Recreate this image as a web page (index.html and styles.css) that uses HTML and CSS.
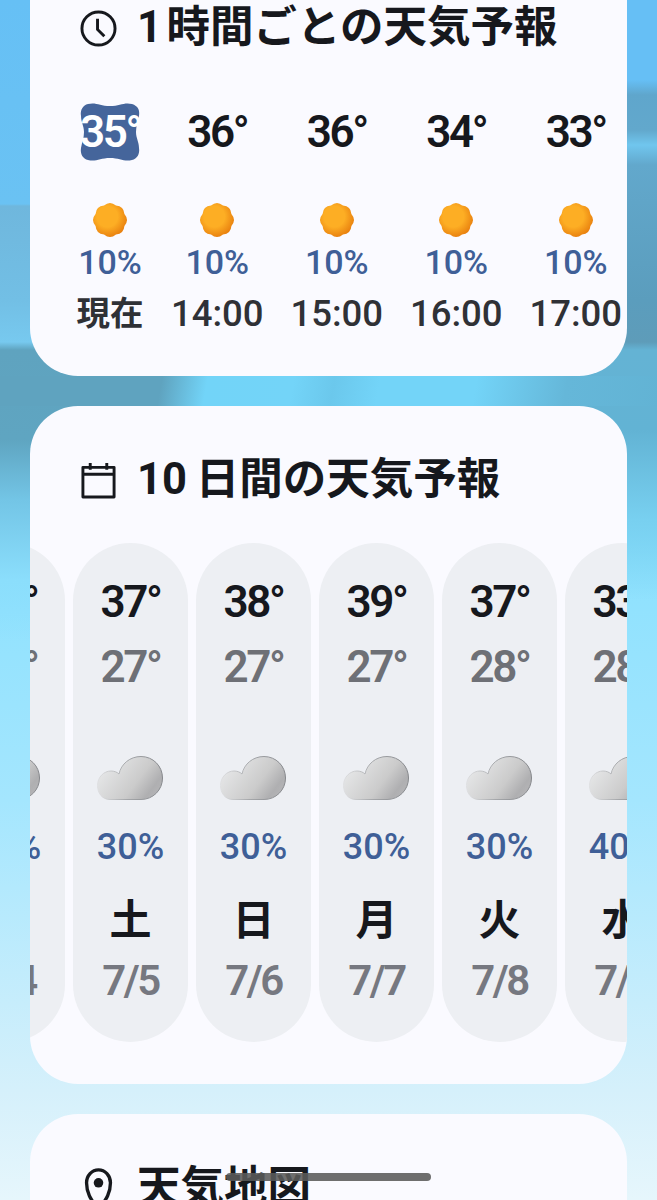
FILE: index.html
```html
<!DOCTYPE html>
<html lang="ja">
<head>
  <meta charset="utf-8">
  <title>天気予報</title>
  <link rel="stylesheet" href="styles.css">
</head>
<body>
  <svg class="defs" width="0" height="0">
    <defs>
      <radialGradient id="sunFill" cx="0.42" cy="0.4" r="0.68">
        <stop offset="0.45" stop-color="#fdae24"/>
        <stop offset="1" stop-color="#e4760a"/>
      </radialGradient>
      <linearGradient id="cloudFill" x1="0" y1="0.3" x2="1" y2="0.8">
        <stop offset="0" stop-color="#e8e9ea"/>
        <stop offset="0.6" stop-color="#cbcbcb"/>
        <stop offset="0.85" stop-color="#afafb1"/>
        <stop offset="1" stop-color="#b5b5b7"/>
      </linearGradient>
      <linearGradient id="cloudLine" x1="0" y1="0" x2="1" y2="0">
        <stop offset="0" stop-color="#dfe0e2"/>
        <stop offset="0.45" stop-color="#a5a7aa"/>
        <stop offset="1" stop-color="#85878b"/>
      </linearGradient>
      <symbol id="sun" viewBox="0 0 36 36">
        <path fill="url(#sunFill)" d="M32.41 23.97Q31.86 31.86 23.97 32.41Q18 37.6 12.03 32.41Q4.14 31.86 3.59 23.97Q-1.6 18 3.59 12.03Q4.14 4.14 12.03 3.59Q18 -1.6 23.97 3.59Q31.86 4.14 32.41 12.03Q37.6 18 32.41 23.97Z"/>
      </symbol>
      <symbol id="cloud" viewBox="0 0 66 44">
        <path fill="url(#cloudFill)" stroke="url(#cloudLine)" stroke-width="1" d="M13 43.500C5 43.500 .5 37 .5 29.500C.5 21 7 15 14 15C17 15 20 16 22 18C24 8 33 .5 44 .5C56 .5 65.500 10 65.500 22C65.500 34 56 43.500 44 43.500Z"/>
      </symbol>
    </defs>
  </svg>

  <div class="page">
    <section class="card hourly">
      <h2 class="card-title">
        <svg class="title-icon" viewBox="0 0 38 38"><circle cx="19" cy="19" r="17" fill="none" stroke="currentColor" stroke-width="3"/><path d="M18 9v11l7 7" fill="none" stroke="currentColor" stroke-width="3"/></svg>
        <span>1&#8202;時間ごとの天気予報</span>
      </h2>
      <div class="hour-row">
        <div class="hour hour-now">
          <div class="temp now-temp">
            <svg class="now-badge" viewBox="0 0 60 60"><path d="M8 2C16 0 20 4 30 4C40 4 44 0 52 2C58 4 60 8 59 14C58 20 56 24 56 30C56 36 59 40 59 46C60 52 57 57 52 58C44 60 40 56 30 56C20 56 16 60 8 58C3 57 0 52 1 46C2 40 4 36 4 30C4 24 1 20 1 14C0 8 3 3 8 2Z"/></svg>
            <span>35°</span>
          </div>
          <svg class="sun"><use href="#sun"/></svg>
          <div class="rain">10%</div>
          <div class="time time-now">現在</div>
        </div>
        <div class="hour">
          <div class="temp">36°</div>
          <svg class="sun"><use href="#sun"/></svg>
          <div class="rain">10%</div>
          <div class="time">14:00</div>
        </div>
        <div class="hour">
          <div class="temp">36°</div>
          <svg class="sun"><use href="#sun"/></svg>
          <div class="rain">10%</div>
          <div class="time">15:00</div>
        </div>
        <div class="hour">
          <div class="temp">34°</div>
          <svg class="sun"><use href="#sun"/></svg>
          <div class="rain">10%</div>
          <div class="time">16:00</div>
        </div>
        <div class="hour">
          <div class="temp">33°</div>
          <svg class="sun"><use href="#sun"/></svg>
          <div class="rain">10%</div>
          <div class="time">17:00</div>
        </div>
      </div>
    </section>

    <section class="card daily">
      <h2 class="card-title">
        <svg class="title-icon" viewBox="0 0 38 38"><path d="M3 5.500h32v30.500H3zM3 12.500h32M10.500 1v7M27.500 1v7" fill="none" stroke="currentColor" stroke-width="3" stroke-linejoin="round"/></svg>
        <span>10 日間の天気予報</span>
      </h2>
      <div class="day-row">
        <div class="day"><div class="temp">37°</div><div class="low">27°</div><svg class="cloud"><use href="#cloud"/></svg><div class="rain">30%</div><div class="weekday">金</div><div class="date">7/4</div></div>
        <div class="day"><div class="temp">37°</div><div class="low">27°</div><svg class="cloud"><use href="#cloud"/></svg><div class="rain">30%</div><div class="weekday">土</div><div class="date">7/5</div></div>
        <div class="day"><div class="temp">38°</div><div class="low">27°</div><svg class="cloud"><use href="#cloud"/></svg><div class="rain">30%</div><div class="weekday">日</div><div class="date">7/6</div></div>
        <div class="day"><div class="temp">39°</div><div class="low">27°</div><svg class="cloud"><use href="#cloud"/></svg><div class="rain">30%</div><div class="weekday">月</div><div class="date">7/7</div></div>
        <div class="day"><div class="temp">37°</div><div class="low">28°</div><svg class="cloud"><use href="#cloud"/></svg><div class="rain">30%</div><div class="weekday">火</div><div class="date">7/8</div></div>
        <div class="day"><div class="temp">33°</div><div class="low">28°</div><svg class="cloud"><use href="#cloud"/></svg><div class="rain">40%</div><div class="weekday">水</div><div class="date">7/9</div></div>
      </div>
    </section>

    <section class="card map">
      <h2 class="card-title">
        <svg class="title-icon pin" viewBox="0 0 38 46"><path d="M19 44C13 35 6.500 28 6.500 15.500a12.500 13.500 0 0 1 25 0C31.500 28 25 35 19 44Z" fill="none" stroke="currentColor" stroke-width="3.500"/><circle cx="19" cy="15.500" r="5" fill="currentColor"/></svg>
        <span>天気地図</span>
      </h2>
    </section>
  </div>

  <div class="home-bar"></div>
</body>
</html>
```

FILE: styles.css
```css
* {
  margin: 0;
  padding: 0;
  box-sizing: border-box;
}

html, body {
  height: 1200px;
  overflow: hidden;
}

body {
  position: relative;
  font-family: Roboto, "Noto Sans CJK JP", sans-serif;
  color: #16181d;
  background:
    linear-gradient(100deg, #5fa3bf 0, #5fa3bf 160px, #72d4f8 205px, #73d4f8 290px, #6bc8ec 330px, #73d4f8 375px, #73d4f8 470px, #65b7d9 560px, #62b3d4 657px) 0 376px / 100% 30px no-repeat,
    linear-gradient(#66c0f5 0, #6ac2f3 204px, #6fb7dd 206px, #72bfe5 300px, #77c9ef 342px, #5fa3bf 350px, #5fa5c1 440px, #73c5e6 500px, #8bdefc 580px, rgba(139, 222, 252, 0) 640px) 0 0 / 80px 100% no-repeat,
    linear-gradient(#66bff5 0, #66bff5 80px, #5fa6cc 95px, #62a8cc 130px, #70c6ee 145px, #62a8cc 165px, #5b9dbd 300px, #5e9cb9 342px, #64b3d4 350px, #62b3d4 430px, #78d0f0 520px, rgba(120, 208, 240, 0) 600px) 100% 0 / 80px 100% no-repeat,
    linear-gradient(#66c0f5 0, #73d4f8 400px, #8de1fe 560px, #a4e6fe 800px, #d5f0fb 1090px, #e6f6fc 1200px);
}

.defs {
  display: block;
}

.page {
  display: flex;
  flex-direction: column;
  gap: 30px;
  margin-top: -100px;
  padding: 0 30px;
}

.card {
  flex: none;
  background: #fafaff;
  border-radius: 48px;
  overflow: hidden;
}

.card-title {
  display: flex;
  align-items: center;
  gap: 20px;
  height: 56px;
  padding-left: 50px;
  font-size: 43.5px;
  font-weight: 700;
  line-height: 56px;
  white-space: nowrap;
  word-spacing: -2px;
}

.title-icon {
  width: 37px;
  height: 37px;
  flex: none;
}

.pin {
  width: 37px;
  height: 44px;
  margin-top: 4px;
}

/* hourly */
.hourly {
  height: 476px;
  padding-top: 100px;
}

.hour-row {
  display: flex;
  gap: 29px;
  margin-top: 46px;
  padding-left: 47px;
}

.hour {
  display: flex;
  flex-direction: column;
  align-items: center;
  width: 90.5px;
}

.hour-now {
  width: 66px;
}

.temp {
  font-size: 44px;
  font-weight: 600;
  line-height: 60px;
  letter-spacing: -2.5px;
  white-space: nowrap;
}

.now-temp {
  position: relative;
  color: #fff;
}

.now-temp span {
  position: relative;
}

.now-badge {
  position: absolute;
  left: 50%;
  top: 0;
  width: 60px;
  height: 60px;
  margin-left: -30px;
  fill: #45659b;
}

.sun {
  width: 36px;
  height: 36px;
  margin-top: 40px;
}

.rain {
  margin-top: 2px;
  color: #3f5f97;
  font-size: 34px;
  font-weight: 500;
  line-height: 44px;
}

.time {
  margin-top: 5px;
  color: #2f3136;
  font-size: 36.5px;
  font-weight: 500;
  line-height: 50px;
  white-space: nowrap;
}

.time-now {
  font-size: 33.5px;
  font-weight: 700;
}

/* daily */
.daily {
  height: 678px;
  padding-top: 46px;
}

.day-row {
  display: flex;
  gap: 8px;
  margin-top: 35px;
  margin-left: -80px;
}

.day {
  display: flex;
  flex: none;
  flex-direction: column;
  align-items: center;
  width: 115px;
  height: 499px;
  padding-top: 29px;
  border-radius: 58px;
  background: #edeff3;
}

.low {
  margin-top: 5px;
  color: #6e7076;
  font-size: 44px;
  font-weight: 600;
  line-height: 60px;
  letter-spacing: -2.5px;
}

.cloud {
  width: 66px;
  height: 44px;
  margin-top: 59px;
  margin-left: -1px;
}

.day .rain {
  margin-top: 25px;
  font-size: 36px;
}

.weekday {
  margin-top: 24px;
  font-size: 42px;
  font-weight: 700;
  line-height: 56px;
}

.date {
  margin-top: 4px;
  color: #767880;
  font-size: 42px;
  font-weight: 600;
  line-height: 56px;
  letter-spacing: -2.5px;
}

/* map */
.map {
  height: 200px;
  padding-top: 46px;
}

.home-bar {
  position: absolute;
  left: 226px;
  top: 1173px;
  width: 205px;
  height: 8px;
  border-radius: 4px;
  background: rgba(90, 90, 90, .88);
}
```
